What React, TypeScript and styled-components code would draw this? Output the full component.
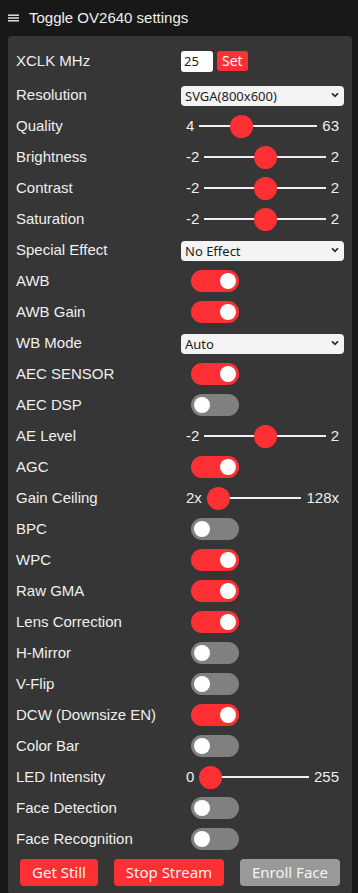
import React from 'react';
import styled, { createGlobalStyle } from 'styled-components';

const GlobalStyle = createGlobalStyle`
  body {
    margin: 8px 6px 8px 8px;
    background: #181818;
    color: #efefef;
    font-family: "Liberation Sans", Arial, Helvetica, sans-serif;
    font-size: 15px;
  }
`;

const NavToggle = styled.div`
  display: flex;
  align-items: center;
  gap: 9px;
  height: 20px;
  margin-bottom: 8px;
  font-size: 15px;
  line-height: 20px;
`;

const Menu = styled.div`
  display: flex;
  flex-direction: column;
  gap: 9px;
  padding: 14px 8px 8px;
  background: #363636;
  border-radius: 4px;
`;

const InputGroup = styled.div<{ $tall?: boolean }>`
  display: flex;
  align-items: center;
  height: 22px;
  line-height: 22px;
  margin-bottom: ${p => (p.$tall ? '3px' : '0')};
`;

const Label = styled.label`
  flex: 0 0 165px;
  white-space: nowrap;
`;

const TextInput = styled.input`
  width: 32px;
  height: 21px;
  box-sizing: border-box;
  border: 0;
  border-radius: 3px;
  padding: 0 3px;
  font-family: "Noto Sans", sans-serif;
  font-size: 13px;
  color: #222;
  background: #fff;
  outline: 0;
`;

const SmallButton = styled.button`
  margin-left: 4px;
  height: 20px;
  padding: 0 5px;
  border: 0;
  border-radius: 3px;
  background: #ff3034;
  color: #fff;
  font-family: "Noto Sans", sans-serif;
  font-size: 14px;
  line-height: 20px;
`;

const SelectWrap = styled.div`
  position: relative;
  flex: 1;
  height: 20px;
`;

const Select = styled.select`
  appearance: none;
  -webkit-appearance: none;
  width: 100%;
  height: 20px;
  box-sizing: border-box;
  border: 0;
  border-radius: 4px;
  padding: 0 4px;
  background: #f4f4f4;
  color: #1d1d1d;
  font-family: "Noto Sans", sans-serif;
  font-size: 13px;
  line-height: 20px;
  outline: 0;
`;

const Chevron = styled.svg`
  position: absolute;
  right: 5px;
  top: 7px;
  pointer-events: none;
`;

const RangeValue = styled.span`
  padding: 0 5px;
  white-space: nowrap;
`;

const Range = styled.input`
  -webkit-appearance: none;
  appearance: none;
  flex: 1;
  min-width: 0;
  height: 22px;
  margin: 0;
  background: transparent;

  &::-webkit-slider-runnable-track {
    height: 2px;
    background: #efefef;
    border: 0;
  }

  &::-webkit-slider-thumb {
    -webkit-appearance: none;
    width: 23px;
    height: 23px;
    margin-top: -10.5px;
    border: 0;
    border-radius: 50%;
    background: #ff3034;
  }
`;

const Switch = styled.span<{ $on: boolean }>`
  position: relative;
  display: block;
  width: 48px;
  height: 22px;
  margin-left: 10px;
  border-radius: 11px;
  background: ${p => (p.$on ? '#ff3034' : 'grey')};

  &::before {
    content: "";
    position: absolute;
    top: 3px;
    left: ${p => (p.$on ? '29px' : '3px')};
    width: 16px;
    height: 16px;
    border-radius: 50%;
    background: #fff;
  }
`;

const Buttons = styled.section`
  display: flex;
  justify-content: space-between;
  padding: 0 4px;
`;

const Button = styled.button<{ $disabled?: boolean }>`
  height: 27px;
  padding: 0 12px;
  border: 0;
  border-radius: 4px;
  background: ${p => (p.$disabled ? '#999' : '#ff3034')};
  color: #f4f4f4;
  font-family: "Noto Sans", sans-serif;
  font-size: 15px;
  line-height: 27px;
`;

type Row =
  | { kind: 'select'; label: string; value: string }
  | { kind: 'range'; label: string; min: number; max: number; value: number; minText?: string; maxText?: string }
  | { kind: 'switch'; label: string; on: boolean };

const rows: Row[] = [
  { kind: 'select', label: 'Resolution', value: 'SVGA(800x600)' },
  { kind: 'range', label: 'Quality', min: 4, max: 63, value: 23 },
  { kind: 'range', label: 'Brightness', min: -2, max: 2, value: 0 },
  { kind: 'range', label: 'Contrast', min: -2, max: 2, value: 0 },
  { kind: 'range', label: 'Saturation', min: -2, max: 2, value: 0 },
  { kind: 'select', label: 'Special Effect', value: 'No Effect' },
  { kind: 'switch', label: 'AWB', on: true },
  { kind: 'switch', label: 'AWB Gain', on: true },
  { kind: 'select', label: 'WB Mode', value: 'Auto' },
  { kind: 'switch', label: 'AEC SENSOR', on: true },
  { kind: 'switch', label: 'AEC DSP', on: false },
  { kind: 'range', label: 'AE Level', min: -2, max: 2, value: 0 },
  { kind: 'switch', label: 'AGC', on: true },
  { kind: 'range', label: 'Gain Ceiling', min: 0, max: 6, value: 0, minText: '2x', maxText: '128x' },
  { kind: 'switch', label: 'BPC', on: false },
  { kind: 'switch', label: 'WPC', on: true },
  { kind: 'switch', label: 'Raw GMA', on: true },
  { kind: 'switch', label: 'Lens Correction', on: true },
  { kind: 'switch', label: 'H-Mirror', on: false },
  { kind: 'switch', label: 'V-Flip', on: false },
  { kind: 'switch', label: 'DCW (Downsize EN)', on: true },
  { kind: 'switch', label: 'Color Bar', on: false },
  { kind: 'range', label: 'LED Intensity', min: 0, max: 255, value: 0 },
  { kind: 'switch', label: 'Face Detection', on: false },
  { kind: 'switch', label: 'Face Recognition', on: false },
];

function Hamburger() {
  return (
    <svg width="12" height="8" viewBox="0 0 12 8">
      <rect x="0" y="0.5" width="11" height="1.4" fill="#efefef" />
      <rect x="0" y="3.3" width="11" height="1.4" fill="#efefef" />
      <rect x="0" y="6.1" width="11" height="1.4" fill="#efefef" />
    </svg>
  );
}

function Control({ row }: { row: Row }) {
  if (row.kind === 'select') {
    return (
      <SelectWrap>
        <Select defaultValue={row.value}>
          <option>{row.value}</option>
        </Select>
        <Chevron width="8" height="6" viewBox="0 0 8 6">
          <path d="M1 1.2 L4 4.3 L7 1.2" fill="none" stroke="#222" strokeWidth="1.6" />
        </Chevron>
      </SelectWrap>
    );
  }
  if (row.kind === 'range') {
    return (
      <>
        <RangeValue>{row.minText ?? row.min}</RangeValue>
        <Range type="range" min={row.min} max={row.max} defaultValue={row.value} />
        <RangeValue>{row.maxText ?? row.max}</RangeValue>
      </>
    );
  }
  return <Switch $on={row.on} />;
}

export default function App() {
  return (
    <>
      <GlobalStyle />
      <NavToggle>
        <Hamburger />
        <span>Toggle OV2640 settings</span>
      </NavToggle>
      <Menu>
        <InputGroup $tall>
          <Label>XCLK MHz</Label>
          <TextInput defaultValue="25" />
          <SmallButton>Set</SmallButton>
        </InputGroup>
        {rows.map(row => (
          <InputGroup key={row.label}>
            <Label>{row.label}</Label>
            <Control row={row} />
          </InputGroup>
        ))}
        <Buttons>
          <Button>Get Still</Button>
          <Button>Stop Stream</Button>
          <Button $disabled>Enroll Face</Button>
        </Buttons>
      </Menu>
    </>
  );
}
